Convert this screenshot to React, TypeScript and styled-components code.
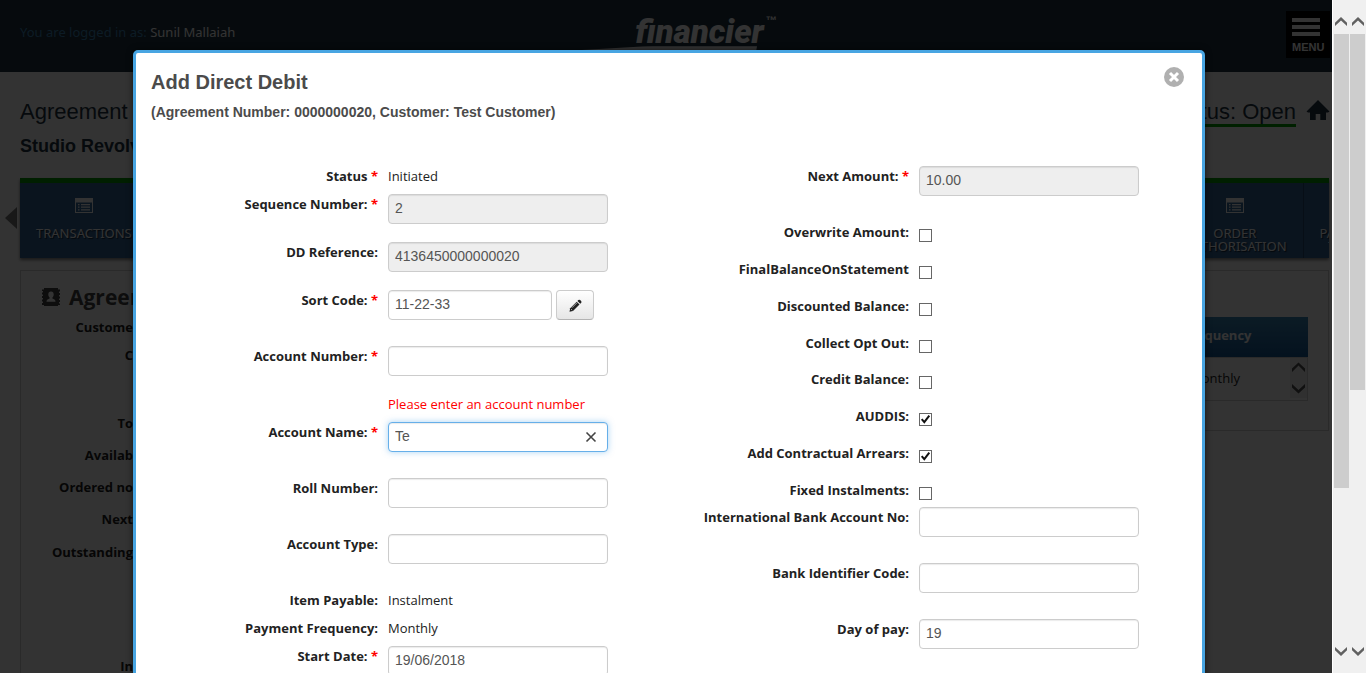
import React from "react";
import styled, { createGlobalStyle, css } from "styled-components";

const GlobalStyle = createGlobalStyle`
  *, *::before, *::after { box-sizing: border-box; }
  html, body { margin: 0; padding: 0; }
  body {
    font-family: "Open Sans", "Noto Sans", sans-serif;
    font-size: 13px;
    line-height: 20px;
    color: #222;
    background: #fff;
  }
  button, input { font-family: inherit; }
`;

const arial = css`font-family: "Liberation Sans", Arial, sans-serif;`;

const Window = styled.div`
  display: grid;
  grid-template-columns: minmax(0, 1fr) 17px 17px;
  height: 100vh;
  overflow: hidden;
`;

const Viewport = styled.div`
  position: relative;
  overflow: hidden;
`;

/* Page behind the dialog */

const Header = styled.header`
  display: grid;
  grid-template-columns: 1fr auto 1fr;
  height: 72px;
  padding: 0 2px 0 20px;
  background: #1e3240;
`;

const LoggedIn = styled.p`
  margin: 22px 0 0;
  font-family: "Noto Sans", sans-serif;
  color: #3f87b8;
  span { color: #fff; }
`;

const Brand = styled.div`
  display: grid;
  justify-items: start;
  align-content: start;
  color: #fff;
`;

const BrandName = styled.div`
  display: flex;
  align-items: flex-start;
  height: 32px;
  margin: 14px 0 0 62px;
  font: italic 900 33px/36px Roboto, sans-serif;
  sup {
    font: bold 11px/10px "Liberation Sans", Arial, sans-serif;
    margin: 1px 0 0 2px;
  }
`;

const MenuButton = styled.button`
  justify-self: end;
  display: flex;
  flex-direction: column;
  gap: 3px;
  width: 44px;
  height: 47px;
  margin-top: 11px;
  padding: 7px 6px 0;
  border: 0;
  background: #000;
  color: #fff;
  font: bold 11px/16px "Liberation Sans", Arial, sans-serif;
  text-align: left;
`;

const MenuLine = styled.span`
  width: 28px;
  height: 4px;
  background: #fff;
`;

const TitleRow = styled.div`
  display: flex;
  justify-content: space-between;
  align-items: flex-start;
  margin-top: 27px;
  padding: 0 2px 0 20px;
  ${arial}
  font-size: 22px;
  line-height: 26px;
  color: #1e3342;
`;

const StatusGroup = styled.div`
  display: flex;
  gap: 10px;
  > span { height: 28px; border-bottom: 3px solid #00a000; }
`;

const Subtitle = styled.h2`
  margin: 9px 0 0 20px;
  ${arial}
  font-size: 18px;
  line-height: 20px;
  color: #1e3342;
`;

const NavRow = styled.nav`
  display: flex;
  align-items: center;
  margin: 22px 3px 0 5px;
  gap: 3px;
`;

const TileStrip = styled.div`
  flex: 1;
  display: flex;
  justify-content: space-between;
  height: 80px;
  overflow: hidden;
  border-top: 5px solid #009900;
  background: #346598;
  box-shadow: 0 2px 3px rgba(0, 0, 0, 0.5);
`;

const TileGroup = styled.div`
  display: flex;
  width: 162px;
`;

const Tile = styled.a`
  flex: none;
  display: flex;
  flex-direction: column;
  align-items: center;
  gap: 14px;
  padding: 15px 16px 0;
  border-right: 1px solid #244870;
  color: #fff;
  font-family: "Noto Sans", sans-serif;
  font-size: 13px;
  line-height: 13px;
  text-align: center;
  text-decoration: none;
  white-space: pre-line;
  text-shadow: 1px 1px 1px #123;
`;

const Panels = styled.div`
  display: flex;
  justify-content: space-between;
  align-items: flex-start;
  margin: 12px 3px 0 20px;
`;

const Panel = styled.section`
  width: 640px;
  border: 1px solid #d0d0d0;
`;

const PanelTitle = styled.h3`
  display: flex;
  align-items: center;
  gap: 9px;
  margin: 14px 0 8px 21px;
  font-size: 21px;
  line-height: 24px;
  color: #444;
`;

const Summary = styled.ul`
  width: 112px;
  margin: 0;
  padding: 0;
  list-style: none;
  font-weight: bold;
  text-align: right;
`;

const SummaryItem = styled.li<{ $h: number }>`
  height: ${(p) => p.$h}px;
  white-space: nowrap;
`;

const TablePanel = styled(Panel)`
  height: 161px;
  padding: 46px 20px 0;
`;

const Table = styled.table`
  width: 100%;
  border-collapse: collapse;
  th {
    height: 40px;
    padding: 0 56px 4px 0;
    text-align: right;
    color: #fff;
    background: linear-gradient(#3a88b8, #155896);
  }
  td {
    height: 43px;
    padding: 0 0 2px;
    border: 1px solid #d0d0d0;
  }
`;

const CellRow = styled.div`
  display: flex;
  justify-content: flex-end;
  align-items: center;
  gap: 50px;
  svg { background: #f0f0f0; }
`;

/* Dialog */

const Overlay = styled.div`
  position: absolute;
  inset: 0;
  padding: 50px 127px 0 133px;
  background: rgba(0, 0, 0, 0.8);
`;

const Dialog = styled.div`
  min-height: 720px;
  border: 3px solid #48a5e2;
  border-radius: 5px;
  background: #fff;
  box-shadow: 0 0 6px rgba(0, 0, 0, 0.6);
`;

const DialogHead = styled.div`
  display: flex;
  justify-content: space-between;
  align-items: flex-start;
  height: 113px;
  padding: 14px 18px 0 15px;
  ${arial}
  color: #4b4b4b;
  h1 { margin: 3px 0 8px; font-size: 20px; line-height: 24px; }
  p { margin: 0; font-size: 14px; line-height: 20px; font-weight: bold; }
`;

const CloseButton = styled.button`
  width: 20px;
  height: 20px;
  padding: 0;
  border: 0;
  background: none;
  svg { display: block; }
`;

const Form = styled.form`
  display: grid;
  grid-template-columns: 1fr 1fr;
  padding-right: 4px;
`;

const Row = styled.div<{ $h: number }>`
  display: grid;
  grid-template-columns: 242px 1fr;
  column-gap: 10px;
  align-items: start;
  height: ${(p) => p.$h}px;
`;

const Label = styled.label`
  font-weight: bold;
  text-align: right;
  white-space: nowrap;
  color: #222;
`;

const Star = styled.span`
  color: #f00;
`;

const FieldLine = styled.div`
  display: flex;
  gap: 4px;
`;

const TextInput = styled.input<{ $short?: boolean; $active?: boolean }>`
  width: ${(p) => (p.$short ? 164 : 220)}px;
  height: 30px;
  padding: 0 6px 2px;
  ${arial}
  font-size: 14px;
  color: #555;
  border: 1px solid ${(p) => (p.$active ? "#66afe9" : "#ccc")};
  border-radius: 4px;
  outline: 0;
  background: #fff;
  box-shadow: ${(p) =>
    p.$active
      ? "inset 0 1px 1px rgba(0,0,0,.08), 0 0 6px rgba(82,168,236,.5)"
      : "inset 0 1px 1px rgba(0,0,0,.08)"};
  &:read-only { background: #eee; }
`;

const ClearWrap = styled.div`
  position: relative;
  display: flex;
  width: 220px;
`;

const ClearButton = styled.button`
  position: absolute;
  top: 9px;
  right: 11px;
  width: 12px;
  height: 12px;
  padding: 0;
  border: 0;
  background: none;
  svg { display: block; }
`;

const EditButton = styled.button`
  display: grid;
  place-items: center;
  width: 38px;
  height: 30px;
  padding: 0;
  border: 1px solid #ccc;
  border-bottom-color: #b3b3b3;
  border-radius: 4px;
  background: linear-gradient(#fff, #e6e6e6);
`;

const ErrorText = styled.p`
  margin: 18px 0 0;
  color: #f00;
`;

const CheckWrap = styled.span`
  display: grid;
  width: 13px;
  height: 13px;
  margin-top: 7px;
  > * { grid-area: 1 / 1; }
  svg { pointer-events: none; }
`;

const CheckInput = styled.input`
  appearance: none;
  width: 13px;
  height: 13px;
  margin: 0;
  border: 1px solid #666;
  background: #fff;
`;

/* Scrollbars */

const Track = styled.div<{ $edge?: boolean }>`
  display: flex;
  flex-direction: column;
  align-items: center;
  background: #f0f0f0;
  border-left: ${(p) => (p.$edge ? "1px solid #fff" : "0")};
`;

const TrackArrow = styled.div<{ $end?: boolean }>`
  display: flex;
  justify-content: center;
  height: 34px;
  padding-top: ${(p) => (p.$end ? 8 : 17)}px;
`;

const Thumb = styled.div<{ $size: number }>`
  flex: ${(p) => p.$size} 1 0;
  width: 15px;
  background: #cdcdcd;
`;

const Spare = styled.div<{ $size: number }>`
  flex: ${(p) => p.$size} 1 0;
`;

const Chevron = ({ down }: { down?: boolean }) => (
  <svg width="12" height="9" viewBox="0 0 12 9">
    <path
      d={down ? "M0 0L6 5.5L12 0V3.3L6 9L0 3.3Z" : "M0 9L6 3.5L12 9V5.7L6 0L0 5.7Z"}
      fill="#606060"
    />
  </svg>
);

const ListIcon = () => (
  <svg width="18" height="15" viewBox="0 0 18 15">
    <path d="M0 0h18v15H0z" fill="#fff" />
    <path d="M1 4.5h16V14H1z" fill="#36689c" />
    <path d="M3 6h1.5v1.2H3zM6 6h9v1.2H6zM3 8.6h1.5v1.2H3zM6 8.6h9v1.2H6zM3 11.2h1.5v1.2H3zM6 11.2h9v1.2H6z" fill="#fff" />
  </svg>
);

const HomeIcon = () => (
  <svg width="24" height="22" viewBox="0 0 24 22">
    <path d="M12 1L23.5 12.4L22 13.6H20V21H14.3V15H9.7V21H4V13.6H2L.5 12.4Z" fill="#1e3342" />
  </svg>
);

const ContactIcon = () => (
  <svg width="18" height="18" viewBox="0 0 18 18">
    <path d="M2 0h14v1.5h2v2h-1v1.5h1v2h-1v1.5h1v2h-1V12h1v2h-1v1.5h1V17h-2v1H2v-1H0v-2h1v-1.500H0v-2h1V10H0V8h1V6.500H0v-2h1V3H0V1.500h2z" fill="#444" />
    <path d="M9 3.600c1.800 0 2.700 1.200 2.700 2.900 0 1.400-.6 2.500-1.300 3.100v1c1.500.5 3 1 3.100 3.200h-9c.1-2.200 1.600-2.700 3.100-3.200v-1C6.900 9 6.300 7.900 6.300 6.500c0-1.700.9-2.900 2.700-2.900z" fill="#fff" />
  </svg>
);

const PencilIcon = () => (
  <svg width="13" height="13" viewBox="0 0 13 13">
    <path d="M9.300 1.100Q10.200.2 11.100 1.100L12.100 2.100Q13 3 12.100 3.900L11.200 4.800L8.400 2Z" fill="#222" />
    <path d="M7.700 2.700L10.500 5.500L4 12L.5 12.700L1.200 9.200Z" fill="#222" />
    <path d="M2 10L3.200 11.200M3 8.700L8 3.700" stroke="#ddd" strokeWidth=".7" fill="none" />
  </svg>
);

const Swoosh = () => (
  <svg width="184" height="6" viewBox="0 0 184 6">
    <path d="M0 4.500L60 1Q70 .2 82 .3H184L183 6H0Z" fill="#fff" />
  </svg>
);

type FieldProps = {
  id: string;
  label: string;
  value?: string;
  h?: number;
  required?: boolean;
  readOnly?: boolean;
  checked?: boolean;
};

const FieldLabel = ({ id, label, required }: { id: string; label: string; required?: boolean }) => (
  <Label htmlFor={id}>
    {label}
    {required && <Star> *</Star>}
  </Label>
);

const TextField = ({ id, label, value = "", h = 56, required, readOnly }: FieldProps) => (
  <Row $h={h}>
    <FieldLabel id={id} label={label} required={required} />
    <TextInput id={id} defaultValue={value} readOnly={readOnly} />
  </Row>
);

const ValueField = ({ id, label, value, required }: FieldProps) => (
  <Row $h={28}>
    <FieldLabel id={id} label={label} required={required} />
    <output id={id}>{value}</output>
  </Row>
);

const CheckField = ({ id, label, h = 37, checked = false }: FieldProps) => {
  const [on, setOn] = React.useState(checked);
  return (
    <Row $h={h}>
      <FieldLabel id={id} label={label} />
      <CheckWrap>
        <CheckInput id={id} type="checkbox" checked={on} onChange={() => setOn(!on)} />
        {on && (
          <svg width="13" height="13" viewBox="0 0 13 13">
            <path d="M2.700 6.200L5.300 9.200L10.300 2.700" fill="none" stroke="#111" strokeWidth="2" />
          </svg>
        )}
      </CheckWrap>
    </Row>
  );
};

const summary: [string, number][] = [
  ["Custome", 28],
  ["C", 68],
  ["To", 32],
  ["Availab", 32],
  ["Ordered no", 32],
  ["Next", 33],
  ["Outstanding", 114],
  ["In", 40],
];

export default function App() {
  return (
    <Window>
      <GlobalStyle />
      <Viewport>
        <Header>
          <LoggedIn>
            You are logged in as: <span>Sunil Mallaiah</span>
          </LoggedIn>
          <Brand>
            <BrandName>
              financier<sup>™</sup>
            </BrandName>
            <Swoosh />
          </Brand>
          <MenuButton type="button">
            <MenuLine />
            <MenuLine />
            <MenuLine />
            <span>MENU</span>
          </MenuButton>
        </Header>
        <TitleRow>
          <span>Agreement</span>
          <StatusGroup>
            <span>Status: Open</span>
            <HomeIcon />
          </StatusGroup>
        </TitleRow>
        <Subtitle>Studio Revolving</Subtitle>
        <NavRow>
          <svg width="12" height="22" viewBox="0 0 12 22">
            <path d="M12 0V22L0 11Z" fill="#777" />
          </svg>
          <TileStrip>
            <Tile href="#">
              <ListIcon />
              TRANSACTIONS
            </Tile>
            <TileGroup>
              <Tile href="#">
                <ListIcon />
                {"ORDER\nAUTHORISATION"}
              </Tile>
              <Tile href="#">
                <ListIcon />
                {"PAYMENT\nTARIFF"}
              </Tile>
            </TileGroup>
          </TileStrip>
        </NavRow>
        <Panels>
          <Panel>
            <PanelTitle>
              <ContactIcon />
              Agreement
            </PanelTitle>
            <Summary>
              {summary.map(([text, h]) => (
                <SummaryItem key={text} $h={h}>
                  {text}
                </SummaryItem>
              ))}
            </Summary>
          </Panel>
          <TablePanel>
            <Table>
              <thead>
                <tr>
                  <th>Frequency</th>
                </tr>
              </thead>
              <tbody>
                <tr>
                  <td>
                    <CellRow>
                      Monthly
                      <svg width="17" height="40" viewBox="0 0 17 40">
                        <path d="M2 14L8.500 7.500L15 14V10.500L8.500 4.500L2 10.500ZM2 26L8.500 32L15 26V29.500L8.500 35.500L2 29.500Z" fill="#505050" />
                      </svg>
                    </CellRow>
                  </td>
                </tr>
              </tbody>
            </Table>
          </TablePanel>
        </Panels>

        <Overlay>
          <Dialog role="dialog" aria-labelledby="dialog-title">
            <DialogHead>
              <div>
                <h1 id="dialog-title">Add Direct Debit</h1>
                <p>(Agreement Number: 0000000020, Customer: Test Customer)</p>
              </div>
              <CloseButton type="button" aria-label="Close">
                <svg width="20" height="20" viewBox="0 0 20 20">
                  <circle cx="10" cy="10" r="10" fill="#b0b0b0" />
                  <path d="M6 6L14 14M14 6L6 14" stroke="#fff" strokeWidth="3" />
                </svg>
              </CloseButton>
            </DialogHead>
            <Form>
              <div>
                <ValueField id="status" label="Status" value="Initiated" required />
                <TextField id="sequence" label="Sequence Number:" value="2" h={48} required readOnly />
                <TextField id="reference" label="DD Reference:" value="4136450000000020" h={48} readOnly />
                <Row $h={56}>
                  <FieldLabel id="sort" label="Sort Code:" required />
                  <FieldLine>
                    <TextInput id="sort" defaultValue="11-22-33" $short />
                    <EditButton type="button" aria-label="Edit sort code">
                      <PencilIcon />
                    </EditButton>
                  </FieldLine>
                </Row>
                <Row $h={76}>
                  <FieldLabel id="account" label="Account Number:" required />
                  <div>
                    <FieldLine>
                      <TextInput id="account" />
                    </FieldLine>
                    <ErrorText>Please enter an account number</ErrorText>
                  </div>
                </Row>
                <Row $h={56}>
                  <FieldLabel id="name" label="Account Name:" required />
                  <ClearWrap>
                    <TextInput id="name" defaultValue="Te" $active />
                    <ClearButton type="button" aria-label="Clear account name">
                      <svg width="12" height="12" viewBox="0 0 12 12">
                        <path d="M1.500 1.500L10.500 10.500M10.500 1.500L1.500 10.500" stroke="#444" strokeWidth="1.600" />
                      </svg>
                    </ClearButton>
                  </ClearWrap>
                </Row>
                <TextField id="roll" label="Roll Number:" />
                <TextField id="type" label="Account Type:" />
                <ValueField id="item" label="Item Payable:" value="Instalment" />
                <ValueField id="frequency" label="Payment Frequency:" value="Monthly" />
                <TextField id="start" label="Start Date:" value="19/06/2018" required />
              </div>
              <div>
                <TextField id="next" label="Next Amount:" value="10.00" required readOnly />
                <CheckField id="overwrite" label="Overwrite Amount:" />
                <CheckField id="final" label="FinalBalanceOnStatement" />
                <CheckField id="discounted" label="Discounted Balance:" />
                <CheckField id="optout" label="Collect Opt Out:" h={36} />
                <CheckField id="credit" label="Credit Balance:" />
                <CheckField id="auddis" label="AUDDIS:" checked />
                <CheckField id="arrears" label="Add Contractual Arrears:" checked />
                <CheckField id="fixed" label="Fixed Instalments:" h={27} />
                <TextField id="iban" label="International Bank Account No:" />
                <TextField id="bic" label="Bank Identifier Code:" />
                <TextField id="day" label="Day of pay:" value="19" />
              </div>
            </Form>
          </Dialog>
        </Overlay>
      </Viewport>
      <Track $edge>
        <TrackArrow>
          <Chevron />
        </TrackArrow>
        <Thumb $size={454} />
        <Spare $size={151} />
        <TrackArrow $end>
          <Chevron down />
        </TrackArrow>
      </Track>
      <Track>
        <TrackArrow>
          <Chevron />
        </TrackArrow>
        <Thumb $size={356} />
        <Spare $size={249} />
        <TrackArrow $end>
          <Chevron down />
        </TrackArrow>
      </Track>
    </Window>
  );
}
